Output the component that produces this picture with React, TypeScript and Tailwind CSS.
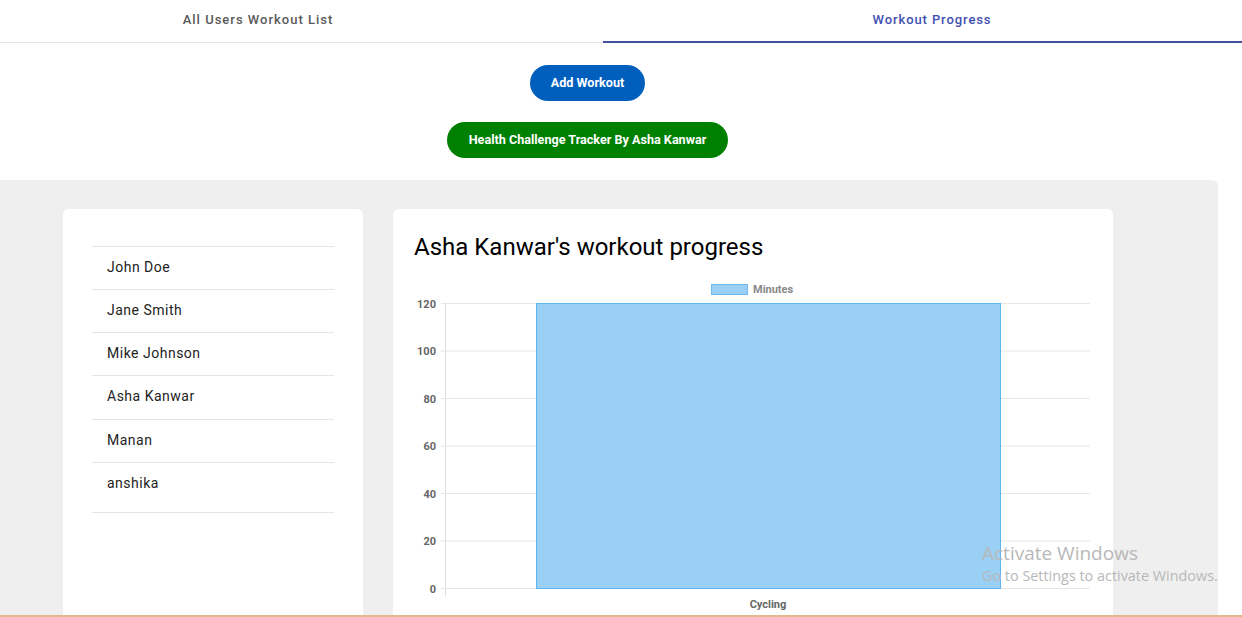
import React from 'react'

const users = ['John Doe', 'Jane Smith', 'Mike Johnson', 'Asha Kanwar', 'Manan', 'anshika']

// y positions of the chart ticks, 120 at the top down to 0
const ticks = [120, 100, 80, 60, 40, 20, 0]

function ProgressChart() {
    const top = 25
    const bottom = 310
    const step = (bottom - top) / 6
    return (
        <svg width="700" height="340" viewBox="0 0 700 340" className="block">
            <rect x="311.5" y="6.5" width="36" height="10" fill="#9bd0f5" stroke="#6cb8ef" strokeWidth="1" />
            <text x="353" y="14.5" fontSize="11" fontWeight="700" fill="#888" fontFamily="Roboto, 'Liberation Sans', sans-serif">
                Minutes
            </text>
            {ticks.map((t, i) => {
                const y = top + step * i + 0.5
                return (
                    <g key={t}>
                        <line x1="41" x2="690" y1={y} y2={y} stroke="#e6e6e6" strokeWidth="1" />
                        <text
                            x="36"
                            y={y + 4}
                            textAnchor="end"
                            fontSize="11"
                            fontWeight="700"
                            fill="#666"
                            fontFamily="Roboto, 'Liberation Sans', sans-serif"
                        >
                            {t}
                        </text>
                    </g>
                )
            })}
            <line x1="45.5" x2="45.5" y1={top} y2="318" stroke="#e0e0e0" strokeWidth="1" />
            <rect x="136.5" y={top + 0.5} width="464" height={bottom - top} fill="#9bd0f5" stroke="#5fb3ee" strokeWidth="1" />
            <text
                x="368"
                y="330"
                textAnchor="middle"
                fontSize="11"
                fontWeight="700"
                fill="#666"
                fontFamily="Roboto, 'Liberation Sans', sans-serif"
            >
                Cycling
            </text>
        </svg>
    )
}

export default function App() {
    return (
        <div className="relative w-[1242px] h-[617px] overflow-hidden bg-white font-['Roboto','Liberation_Sans',sans-serif]">
            {/* tabs */}
            <div className="relative flex h-[43px] border-b border-[#e3e3e8]">
                <div className="w-[516px] flex items-center justify-center text-[13px] font-medium tracking-[1px] text-[#5a5a5a] pb-[2px]">
                    All Users Workout List
                </div>
                <div className="flex-1" />
                <div className="w-[620px] flex items-center justify-center text-[13px] font-medium tracking-[0.9px] text-[#3f4fb0] pb-[2px]">
                    Workout Progress
                </div>
                <div className="absolute left-[603px] right-0 bottom-[-1px] h-[2px] bg-[#4550a0]" />
            </div>

            {/* buttons */}
            <div className="flex flex-col items-center pt-[22px] gap-[21px] pr-[67px]">
                <button className="h-[36px] px-[21px] rounded-full bg-[#005ebd] text-white text-[12.6px] font-bold">
                    Add Workout
                </button>
                <button className="h-[36px] px-[22px] rounded-full bg-[#008000] text-white text-[12.6px] font-bold">
                    Health Challenge Tracker By Asha Kanwar
                </button>
            </div>

            {/* panel */}
            <div className="mt-[22px] w-[1218px] h-[460px] bg-[#efefef] rounded-tr-md flex gap-[30px] pl-[63px] pt-[29px]">
                <div className="w-[300px] bg-white rounded-md pt-[37px] px-[29px]">
                    <ul className="border-b border-[#e5e5e5]">
                        {users.map((u, i) => (
                            <li
                                key={u}
                                className={
                                    'border-t border-[#e5e5e5] pl-[15px] pt-[10px] text-[14px] leading-[20px] tracking-[0.5px] text-[#222] ' +
                                    (i === users.length - 1 ? 'h-[50px]' : i === 3 ? 'h-[44px]' : 'h-[43px]')
                                }
                            >
                                {u}
                            </li>
                        ))}
                    </ul>
                </div>
                <div className="w-[720px] bg-white rounded-md pt-[22px] px-[21px]">
                    <h2 className="text-[24px] leading-[32px] text-black">Asha Kanwar's workout progress</h2>
                    <div className="mt-[15px] -ml-[14px]">
                        <ProgressChart />
                    </div>
                </div>
            </div>

            {/* windows watermark */}
            <div className="absolute left-[982px] top-[541px] text-[#b8b8b8] font-['Open_Sans','Liberation_Sans',sans-serif] pointer-events-none">
                <div className="text-[19px] leading-[24px]">Activate Windows</div>
                <div className="text-[14.4px] leading-[20px] mt-[1px]">Go to Settings to activate Windows.</div>
            </div>

            <div className="absolute left-0 right-0 bottom-0 h-[2px] bg-[#e3b88c]" />
        </div>
    )
}
